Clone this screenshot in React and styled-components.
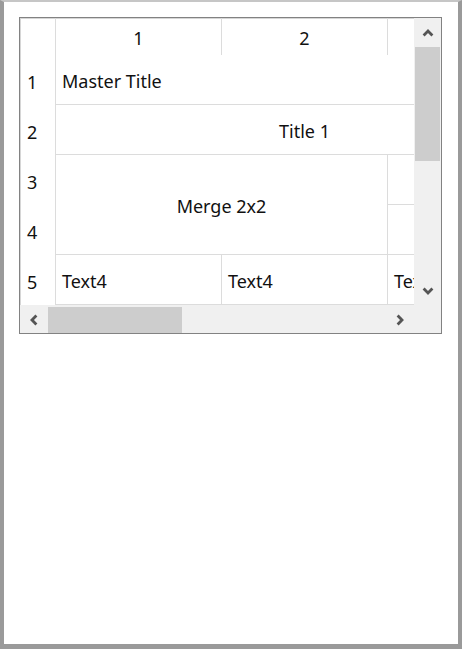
import React from 'react';
import styled, { createGlobalStyle } from 'styled-components';

const GlobalStyle = createGlobalStyle`
  html, body {
    margin: 0;
    padding: 0;
    background: #ffffff;
  }
  body {
    font-family: 'Noto Sans', 'Liberation Sans', sans-serif;
    color: #000;
  }
`;

const Frame = styled.div`
  width: 462px;
  height: 649px;
  box-sizing: border-box;
  border-top: 2px solid #c6c6c6;
  border-left: 4px solid #9a9a9a;
  border-right: 4px solid #9a9a9a;
  border-bottom: 5px solid #9a9a9a;
  background: #fff;
  padding: 15px 0 0 15px;
`;

const GridBox = styled.div`
  width: 423px;
  height: 317px;
  box-sizing: border-box;
  border: 1px solid #828282;
  box-shadow: inset 0 0 0 1px #d6d6d6;
  display: grid;
  grid-template-columns: 394px 27px;
  grid-template-rows: 287px 28px;
  background: #fff;
`;

const Sheet = styled.div`
  overflow: hidden;
  display: grid;
  grid-template-columns: 36px 166px 166px 166px;
  grid-template-rows: 37px repeat(5, 50px);
  width: 394px;
  height: 287px;
  font-size: 18px;
  color: #111;
`;

const Corner = styled.div`
  border-right: 1px solid #dcdcdc;
`;

const ColHead = styled.div`
  display: flex;
  align-items: center;
  justify-content: center;
  border-right: 1px solid #dcdcdc;
  padding-top: 2px;
`;

const RowHead = styled.div`
  display: flex;
  align-items: center;
  padding-left: 7px;
  padding-top: 4px;
  border-right: 1px solid #dcdcdc;
  grid-column: 1;
  grid-row: ${p => p.row + 1};
`;

const Cell = styled.div`
  display: flex;
  align-items: center;
  justify-content: ${p => (p.center ? 'center' : 'flex-start')};
  padding: 3px 6px 0;
  white-space: nowrap;
  overflow: hidden;
  border-right: 1px solid #dcdcdc;
  border-bottom: 1px solid #dcdcdc;
  grid-column: ${p => p.col + 1} / span ${p => p.colSpan || 1};
  grid-row: ${p => p.row + 1} / span ${p => p.rowSpan || 1};
`;

const VScroll = styled.div`
  background: #f0f0f0;
  display: grid;
  grid-template-rows: 29px 114px 1fr 29px;
  padding: 0 1px;
`;

const HScroll = styled.div`
  background: #f0f0f0;
  display: grid;
  grid-template-columns: 28px 134px 1fr 28px;
  padding: 2px 0 0;
`;

const ScrollCorner = styled.div`
  background: #f0f0f0;
`;

const Arrow = styled.div`
  display: flex;
  align-items: center;
  justify-content: center;
`;

const Thumb = styled.div`
  background: #cdcdcd;
`;

const Chevron = ({ dir }) => {
  const rot = { up: 0, right: 90, down: 180, left: 270 }[dir];
  return (
    <svg width="12" height="12" viewBox="0 0 12 12" style={{ transform: `rotate(${rot}deg)` }}>
      <path d="M1.6 8.4 L6 4 L10.4 8.4" fill="none" stroke="#555" strokeWidth="2.8" />
    </svg>
  );
};

export default function App() {
  return (
    <>
      <GlobalStyle />
      <Frame>
        <GridBox>
          <Sheet>
            <Corner />
            <ColHead>1</ColHead>
            <ColHead>2</ColHead>
            <ColHead>3</ColHead>
            {[1, 2, 3, 4, 5].map(n => (
              <RowHead key={n} row={n}>{n}</RowHead>
            ))}
            <Cell row={1} col={1} colSpan={3}>Master Title</Cell>
            <Cell row={2} col={1} colSpan={3} center>Title 1</Cell>
            <Cell row={3} col={1} colSpan={2} rowSpan={2} center>Merge 2x2</Cell>
            <Cell row={3} col={3} />
            <Cell row={4} col={3} />
            <Cell row={5} col={1}>Text4</Cell>
            <Cell row={5} col={2}>Text4</Cell>
            <Cell row={5} col={3}>Text4</Cell>
          </Sheet>
          <VScroll>
            <Arrow><Chevron dir="up" /></Arrow>
            <Thumb />
            <div />
            <Arrow><Chevron dir="down" /></Arrow>
          </VScroll>
          <HScroll>
            <Arrow><Chevron dir="left" /></Arrow>
            <Thumb />
            <div />
            <Arrow><Chevron dir="right" /></Arrow>
          </HScroll>
          <ScrollCorner />
        </GridBox>
      </Frame>
    </>
  );
}
